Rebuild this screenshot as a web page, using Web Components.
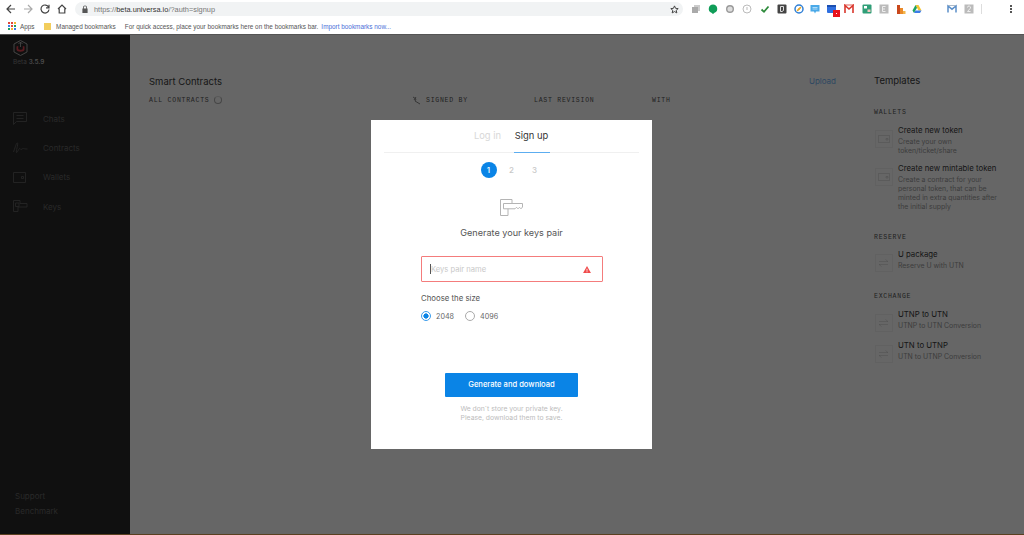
<!DOCTYPE html>
<html>
<head>
<meta charset="utf-8">
<title>Universa</title>
<style>
  html, body { margin: 0; padding: 0; height: 100%; overflow: hidden; background: #fff; }
  body { display: flex; flex-direction: column; width: 1024px; height: 535px; font-family: Inter, "Liberation Sans", sans-serif; }
</style>
</head>
<body>
<browser-bar></browser-bar>
<app-shell>
  <app-sidebar></app-sidebar>
  <contracts-view></contracts-view>
  <templates-panel></templates-panel>
  <auth-modal></auth-modal>
</app-shell>

<script>
const KEY_PATH = "M.5.5H12V4.5H22.5V8L21 9.8 19.5 8.3 18 9.8 16.5 8.3 15 9.8H8V16.5H.5ZM12 4.5H3.5V9.8H8"

class BrowserBar extends HTMLElement {
  constructor() {
    super()
    this.attachShadow({ mode: "open" }).innerHTML = /* html */ `
      <style>
        :host { display: block; height: 35px; background: #fff; border-bottom: 1px solid #555; box-sizing: border-box; font-family: "Liberation Sans", sans-serif; flex: none; }
        .toolbar { display: flex; align-items: center; height: 18px; }
        .nav { display: flex; align-items: center; width: 75px; padding-left: 6px; gap: 7px; box-sizing: border-box; }
        .nav svg { width: 10px; height: 10px; fill: none; stroke: #444; stroke-width: 1.2; flex: none; }
        .nav svg.off { stroke: #aaa; }
        .url { width: 608px; height: 14px; background: #f1f3f4; border-radius: 7px; display: flex; align-items: center; font-size: 7.4px; color: #777; box-sizing: border-box; padding-left: 7px; flex: none; position: relative; }
        .url b { font-weight: 400; color: #333; }
        .url svg { width: 6px; height: 8px; margin-right: 6px; fill: #555; }
        .url .star { position: absolute; right: 4px; top: 3px; width: 9px; height: 9px; margin: 0; fill: none; stroke: #444; stroke-width: 1.1; }
        .ext { position: relative; flex: 1; height: 18px; }
        .ext svg { position: absolute; top: 4px; width: 10px; height: 10px; }
        .dots { position: absolute; left: 327px; top: 5px; width: 2px; height: 8px; background: radial-gradient(circle at 1px 1px, #555 1px, transparent 1.1px) 0 0 / 2px 3px; }
        .sep { position: absolute; left: 298px; top: 4px; width: 1px; height: 10px; background: #ddd; }
        .marks { display: flex; align-items: center; height: 16px; font-size: 6.4px; color: #555; padding-left: 8px; white-space: nowrap; }
        .apps { width: 8px; height: 8px; margin-right: 4px; flex: none; }
        .folder { width: 7px; height: 7px; background: #f2cd5c; margin: 0 5px 0 9.5px; flex: none; }
        .hint { margin-left: 9px; }
        a { color: #4a6fd8; margin-left: 3px; }
      </style>
      <div class="toolbar">
        <div class="nav">
          <svg viewBox="0 0 10 10"><path d="M9 5H1.5M5 1 1 5l4 4"/></svg>
          <svg class="off" viewBox="0 0 10 10"><path d="M1 5h7.5M5 1l4 4-4 4"/></svg>
          <svg viewBox="0 0 10 10"><path d="M8.6 3.2A4 4 0 1 0 9 5.5M9 .8v3H6"/></svg>
          <svg viewBox="0 0 10 10"><path d="M1 5 5 1l4 4M2.2 4.5V9h5.6V4.5"/></svg>
        </div>
        <div class="url">
          <svg viewBox="0 0 6 8"><path d="M1 3.5V2.4a2 2 0 0 1 4 0v1.1h.6V8H.4V3.5ZM1.8 3.5h2.4V2.4a1.2 1.2 0 0 0-2.4 0Z"/></svg>
          <span>https://<b>beta.universa.io</b>/?auth=signup</span>
          <svg class="star" viewBox="0 0 10 10"><path d="M5 1l1.2 2.7 2.9.3-2.2 1.9.7 2.9L5 7.3 2.4 8.8l.7-2.9L.9 4l2.9-.3Z"/></svg>
        </div>
        <div class="ext">
          <svg style="left:8px" viewBox="0 0 10 10"><rect x="3" y="1" width="6" height="6" fill="#ccc"/><rect x="1" y="3" width="6" height="6" fill="#aaa"/></svg>
          <svg style="left:25px" viewBox="0 0 10 10"><path d="M5 .5a4.3 4.3 0 0 1 1.5 8.3L5 10 3.5 8.8A4.3 4.3 0 0 1 5 .5Z" fill="#0f9d58"/></svg>
          <svg style="left:42px" viewBox="0 0 10 10"><circle cx="5" cy="5" r="3.3" fill="#ddd" stroke="#999" stroke-width="1.4"/></svg>
          <svg style="left:59px" viewBox="0 0 10 10"><circle cx="5" cy="5" r="4" fill="#fff" stroke="#bbb"/><path d="M5 3v3" stroke="#bbb"/></svg>
          <svg style="left:77px" viewBox="0 0 10 10"><path d="M1.5 5.5 4 7.8 8.5 2.5" fill="none" stroke="#2e8b3c" stroke-width="1.8"/></svg>
          <svg style="left:94px" viewBox="0 0 10 10"><rect x=".5" y=".5" width="9" height="9" rx="1" fill="#444"/><path d="M3.5 2.5h3v4L5 7.5H3.5Z" fill="none" stroke="#ddd"/></svg>
          <svg style="left:111px" viewBox="0 0 10 10"><circle cx="5" cy="5" r="4" fill="#fff" stroke="#2f7fd6" stroke-width="1.5"/><path d="M3 7 4.5 4.5 7 3 5.5 5.5Z" fill="#e8a72a" stroke="#e8a72a"/></svg>
          <svg style="left:127px" viewBox="0 0 10 10"><path d="M.5 1h9v6.5H6L5 9.5 4 7.5H.5Z" fill="#4aa9e8"/><path d="M2.5 3.5h5M2.5 5h5" stroke="#d8f0ff" stroke-width=".7"/></svg>
          <svg style="left:144px;width:13px;height:13px" viewBox="0 0 13 13"><rect x="0" y="1" width="9" height="8" rx="1" fill="#2f6fe0"/><rect x="0" y="1" width="9" height="2" fill="#1b4fb0"/><rect x="6" y="6" width="7" height="7" fill="#e8121c"/><rect x="9" y="9" width="1" height="1" fill="#fff"/></svg>
          <svg style="left:161px" viewBox="0 0 10 10"><path d="M1 9V1.5L5 5l4-3.5V9" fill="none" stroke="#d9362c" stroke-width="1.6"/><path d="M0 1h10" stroke="#d9362c" stroke-width=".8"/></svg>
          <svg style="left:179px" viewBox="0 0 10 10"><rect x=".5" y=".5" width="9" height="9" rx="1" fill="#2f9e77"/><rect x="2" y="2" width="3" height="2.5" fill="#fff"/><rect x="5.5" y="5.5" width="3" height="2.5" fill="#f3c8c0"/></svg>
          <svg style="left:196px" viewBox="0 0 10 10"><rect x=".5" y=".5" width="9" height="9" fill="#bbb"/><path d="M3.5 2.5h3M3.5 5H6M3.5 7.5h3M3.5 2.5v5" stroke="#eee"/></svg>
          <svg style="left:213px" viewBox="0 0 10 10"><rect x="1" y="1" width="3" height="9" fill="#c9481c"/><rect x="4" y="4" width="3" height="6" fill="#ea8a2a"/><rect x="7" y="7" width="2.5" height="3" fill="#f3b54a"/></svg>
          <svg style="left:229px" viewBox="0 0 10 10"><path d="M3.5 1h3l3 5.5H6.5Z" fill="#f4c430"/><path d="M3.5 1 .5 6.5 2 9l3-5.300Z" fill="#1da261"/><path d="M2 9h6l1.5-2.5h-6Z" fill="#3b7de8"/></svg>
          <svg style="left:264px" viewBox="0 0 10 10"><path d="M1 8.500V2l4 3.200L9 2v6.500" fill="none" stroke="#5b8fc9" stroke-width="1.5"/><path d="M1 1.500h8" stroke="#9ab" stroke-width=".8"/></svg>
          <svg style="left:281px" viewBox="0 0 10 10"><rect x=".5" y=".5" width="9" height="9" fill="#bbb"/><path d="M3.5 3.500a1.500 1.500 0 1 1 2.800.8L3.500 7.500h3" fill="none" stroke="#eee"/></svg>
          <div class="sep"></div>
          <div class="dots"></div>
        </div>
      </div>
      <div class="marks">
        <svg class="apps" viewBox="0 0 8 8">
          <g fill="#e0463a"><rect width="2" height="2"/><rect x="3" width="2" height="2"/></g><rect x="6" width="2" height="2" fill="#f2b632"/>
          <g fill="#3b7de8"><rect y="3" width="2" height="2"/></g><rect x="3" y="3" width="2" height="2" fill="#e0463a"/><rect x="6" y="3" width="2" height="2" fill="#1da261"/>
          <rect y="6" width="2" height="2" fill="#1da261"/><rect x="3" y="6" width="2" height="2" fill="#f2b632"/><rect x="6" y="6" width="2" height="2" fill="#3b7de8"/>
        </svg>
        <span>Apps</span>
        <span class="folder"></span>
        <span>Managed bookmarks</span>
        <span class="hint">For quick access, place your bookmarks here on the bookmarks bar.</span>
        <a>Import bookmarks now...</a>
      </div>`
  }
}
customElements.define("browser-bar", BrowserBar)

class AppShell extends HTMLElement {
  constructor() {
    super()
    this.attachShadow({ mode: "open" }).innerHTML = /* html */ `
      <style>
        :host { display: flex; flex: 1; position: relative; min-height: 0; overflow: hidden; background: #fff; }
        .overlay { position: absolute; inset: 0; background: rgba(0, 0, 0, .6); }
        .rim { position: absolute; left: 0; right: 0; bottom: 0; height: 1px; background: #5a4020; }
        ::slotted(auth-modal) { position: absolute; left: 371px; top: 85px; z-index: 2; }
      </style>
      <slot></slot>
      <div class="overlay"></div>
      <div class="rim"></div>`
  }
}
customElements.define("app-shell", AppShell)

class AppSidebar extends HTMLElement {
  constructor() {
    super()
    const links = [
      ["Chats", `<path d="M.5.5H13.5V9.5H3.5L.5 12.5ZM3.5 3.5H10.5M3.5 6.5H10.5"/>`],
      ["Contracts", `<path d="M.5 11C2 7 3.5 1 4.5 2 5.5 3 2.5 11 3.5 11.5S6 6.5 7 7.5 7.5 9 9 8 10.5 8 14.5 8"/>`],
      ["Wallets", `<path d="M.5 1.5H12.5V11.5H.5ZM8.5 5.5H10.5V7.5H8.5Z"/>`],
      ["Keys", `<path d="M.5.5H7V3.5H14V7H5V11.5H.5ZM2.5 3V6.5H6V3Z"/>`]
    ]
    this.attachShadow({ mode: "open" }).innerHTML = /* html */ `
      <style>
        :host { display: flex; flex-direction: column; width: 130px; flex: none; box-sizing: border-box; background: #292929; padding: 5px 0 0 13px; font-family: Inter, "Liberation Sans", sans-serif; }
        .logo { width: 15px; height: 16px; display: block; }
        .version { font-size: 6.5px; line-height: 8px; color: #808080; margin-top: 2px; }
        .version b { font-weight: 500; color: #c4c4c4; }
        nav { display: flex; flex-direction: column; margin-top: 38px; }
        .link { display: flex; align-items: center; height: 29.3px; font-size: 8px; color: #666; }
        .link svg { width: 15px; height: 13px; margin-right: 15px; fill: none; stroke: #5c5c5c; stroke-width: .9; flex: none; }
        footer { margin-top: auto; display: flex; flex-direction: column; gap: 5px; padding: 0 0 19px 2px; font-size: 8px; line-height: 10px; color: #666; }
      </style>
      <svg class="logo" viewBox="0 0 15 16">
        <path d="M7.5.5 14 4V12L7.5 15.5 1 12V4Z" fill="none" stroke="#aaa" stroke-width="1"/>
        <path d="M3.5 6.500V9.500C3.500 12.500 11.500 12.500 11.500 9.500V6.500L9.800 6V9C9.800 10 5.200 10 5.200 9V6Z" fill="#e04450"/>
        <path d="M7.5 2V7M5.5 4 7.5 2 9.5 4" stroke="#aaa" fill="none" stroke-width=".9"/>
      </svg>
      <div class="version">Beta <b>3.5.9</b></div>
      <nav>
        ${links.map(([name, path]) => `<div class="link"><svg viewBox="0 0 15 13">${path}</svg>${name}</div>`).join("")}
      </nav>
      <footer><span>Support</span><span>Benchmark</span></footer>`
  }
}
customElements.define("app-sidebar", AppSidebar)

class ContractsView extends HTMLElement {
  constructor() {
    super()
    this.attachShadow({ mode: "open" }).innerHTML = /* html */ `
      <style>
        :host { display: block; width: 736px; flex: none; box-sizing: border-box; padding: 40px 30px 0 19px; color: #333; font-family: Inter, "Liberation Sans", sans-serif; }
        .head { display: flex; justify-content: space-between; align-items: center; height: 12px; }
        h2 { margin: 0; font-size: 9.5px; font-weight: 400; color: #3c3c3c; }
        a { font-size: 8px; color: #74b4f4; }
        .cols { display: grid; grid-template-columns: 263px 122px 118px 1fr; margin-top: 7px; height: 12px; align-items: center; font: 6.5px "Liberation Mono", monospace; letter-spacing: .75px; color: #555; white-space: nowrap; }
        .cols div { display: flex; align-items: center; }
        .spin { width: 8px; height: 8px; border: 1px solid #b0b0b0; border-radius: 50%; border-top-color: #ddd; box-sizing: border-box; margin-left: 5px; }
        .sign { width: 9px; height: 9px; margin-right: 5px; fill: none; stroke: #888; }
      </style>
      <div class="head"><h2>Smart Contracts</h2><a>Upload</a></div>
      <div class="cols">
        <div>ALL CONTRACTS<span class="spin"></span></div>
        <div><svg class="sign" viewBox="0 0 9 9"><path d="M1 1l3 2-1 2 5 3M4 1 2 4"/></svg>SIGNED BY</div>
        <div>LAST REVISION</div>
        <div>WITH</div>
      </div>`
  }
}
customElements.define("contracts-view", ContractsView)

class TemplateItem extends HTMLElement {
  constructor() {
    super()
    const glyph = this.getAttribute("icon") === "arrows"
      ? `<path d="M2 5.5H11M8.5 3.5 11 5.5M2 8.5H11M4.5 10.5 2 8.5" fill="none"/>`
      : `<path d="M1.5 3.5H12.5V10.5H1.5ZM9 6.5H11V8H9Z" fill="none"/>`
    this.attachShadow({ mode: "open" }).innerHTML = /* html */ `
      <style>
        :host { display: grid; grid-template-columns: 24px 1fr; }
        svg { width: 14px; height: 14px; margin: 7px 0 0 3px; stroke: #000; stroke-width: .8; stroke-opacity: .14; outline: 1px solid rgba(0, 0, 0, .05); outline-offset: 1px; }
        .title { font-size: 7.8px; line-height: 11px; color: #3a3a3a; white-space: nowrap; }
        .sub { font-size: 6.9px; line-height: 9.1px; color: #999; margin-top: 1px; white-space: nowrap; }
      </style>
      <svg viewBox="0 0 14 14">${glyph}</svg>
      <div>
        <div class="title">${this.getAttribute("title")}</div>
        <div class="sub"><slot></slot></div>
      </div>`
  }
}
customElements.define("template-item", TemplateItem)

class TemplatesPanel extends HTMLElement {
  constructor() {
    super()
    this.attachShadow({ mode: "open" }).innerHTML = /* html */ `
      <style>
        :host { display: block; flex: 1; box-sizing: border-box; padding: 40px 0 0 8px; font-family: Inter, "Liberation Sans", sans-serif; }
        h2 { margin: 0; font-size: 9.5px; line-height: 12px; font-weight: 400; color: #3c3c3c; }
        h3 { margin: 0; font: 400 6.5px/8px "Liberation Mono", monospace; letter-spacing: .75px; color: #555; }
        .wallets { margin-top: 22px; }
        .wallets template-item:first-of-type { margin-top: 8px; }
        .wallets template-item + template-item { margin-top: 8px; }
        .reserve { margin-top: 22px; }
        .reserve template-item { margin-top: 7px; }
        .exchange { margin-top: 23px; }
        .exchange template-item:first-of-type { margin-top: 8px; }
        .exchange template-item + template-item { margin-top: 10px; }
      </style>
      <h2>Templates</h2>
      <section class="wallets">
        <h3>WALLETS</h3>
        <template-item title="Create new token">Create your own<br>token/ticket/share</template-item>
        <template-item title="Create new mintable token">Create a contract for your<br>personal token, that can be<br>minted in extra quantities after<br>the initial supply</template-item>
      </section>
      <section class="reserve">
        <h3>RESERVE</h3>
        <template-item icon="arrows" title="U package">Reserve U with UTN</template-item>
      </section>
      <section class="exchange">
        <h3>EXCHANGE</h3>
        <template-item icon="arrows" title="UTNP to UTN">UTNP to UTN Conversion</template-item>
        <template-item icon="arrows" title="UTN to UTNP">UTN to UTNP Conversion</template-item>
      </section>`
  }
}
customElements.define("templates-panel", TemplatesPanel)

class AuthModal extends HTMLElement {
  constructor() {
    super()
    this.attachShadow({ mode: "open" }).innerHTML = /* html */ `
      <style>
        :host { display: flex; flex-direction: column; align-items: center; width: 281px; height: 329px; box-sizing: border-box; background: #fff; font-family: Inter, "Liberation Sans", sans-serif; color: #333; }
        .tabs { align-self: stretch; display: flex; justify-content: center; margin: 0 13px; padding-right: 4px; border-bottom: 1px solid #f0f0f0; height: 33px; box-sizing: border-box; font-size: 9.4px; }
        .tab { padding-top: 9px; line-height: 13px; height: 33px; box-sizing: border-box; color: #d8d8d8; text-align: center; width: 36px; white-space: nowrap; display: flex; justify-content: center; }
        .tab + .tab { margin-left: 8px; }
        .tab.on { color: #333; border-bottom: 1px solid #5cadf0; }
        .steps { display: flex; align-items: center; gap: 15px; margin: 9px 0 0; font-size: 8px; font-weight: 500; color: #c8c8c8; }
        .steps span { width: 8px; text-align: center; }
        .steps .cur { width: 16px; height: 16px; line-height: 16px; border-radius: 50%; background: #0a84e6; color: #fff; margin-right: -4px; margin-left: -4px; }
        .key { width: 23px; height: 17px; margin-top: 21px; fill: none; stroke: #b4b4b4; stroke-width: 1; display: block; }
        h1 { margin: 10px 0 0; font-size: 9.1px; line-height: 14px; font-weight: 400; color: #555; }
        .field { align-self: flex-start; margin: 16px 0 0 50px; width: 182px; height: 26px; box-sizing: border-box; border: 1px solid #f47c7c; border-radius: 1px; display: flex; align-items: center; padding: 0 11px 0 8px; font-size: 7.6px; color: #c9c9c9; }
        .caret { width: 1px; height: 10px; background: #555; }
        .field svg { width: 8px; height: 7px; margin-left: auto; fill: #f04a4a; }
        .label { align-self: flex-start; margin: 10px 0 0 50px; font-size: 7.8px; line-height: 12px; color: #555; }
        .sizes { align-self: flex-start; margin: 6px 0 0 50px; display: flex; align-items: center; font-size: 7.2px; color: #666; height: 12px; }
        .radio { width: 10px; height: 10px; box-sizing: border-box; border: 1px solid #aaa; border-radius: 50%; margin-right: 5px; }
        .radio.on { border-color: #3a9cec; background: radial-gradient(circle, #0a84e6 2.4px, transparent 2.8px); }
        .sizes span + .radio { margin-left: 11px; }
        button { margin-top: 51px; width: 133px; height: 24px; border: 0; border-radius: 1px; background: #0a84e6; color: #fff; font: 500 7.6px Inter, "Liberation Sans", sans-serif; padding: 0 0 2px; }
        .note { margin-top: 7px; font-size: 6.8px; line-height: 9px; color: #bdbdbd; text-align: center; }
      </style>
      <div class="tabs">
        <div class="tab">Log in</div>
        <div class="tab on">Sign up</div>
      </div>
      <div class="steps"><span class="cur">1</span><span>2</span><span>3</span></div>
      <svg class="key" viewBox="0 0 23 17"><path d="${KEY_PATH}"/></svg>
      <h1>Generate your keys pair</h1>
      <div class="field">
        <span class="caret"></span>Keys pair name
        <svg viewBox="0 0 9 8"><path d="M4.5 0 9 8H0ZM4 3V5.5H5V3ZM4 6V7H5V6Z" fill-rule="evenodd"/></svg>
      </div>
      <div class="label">Choose the size</div>
      <div class="sizes">
        <div class="radio on"></div><span>2048</span>
        <div class="radio"></div><span>4096</span>
      </div>
      <button>Generate and download</button>
      <div class="note">We don\`t store your private key.<br>Please, download them to save.</div>`
  }
}
customElements.define("auth-modal", AuthModal)
</script>
</body>
</html>
